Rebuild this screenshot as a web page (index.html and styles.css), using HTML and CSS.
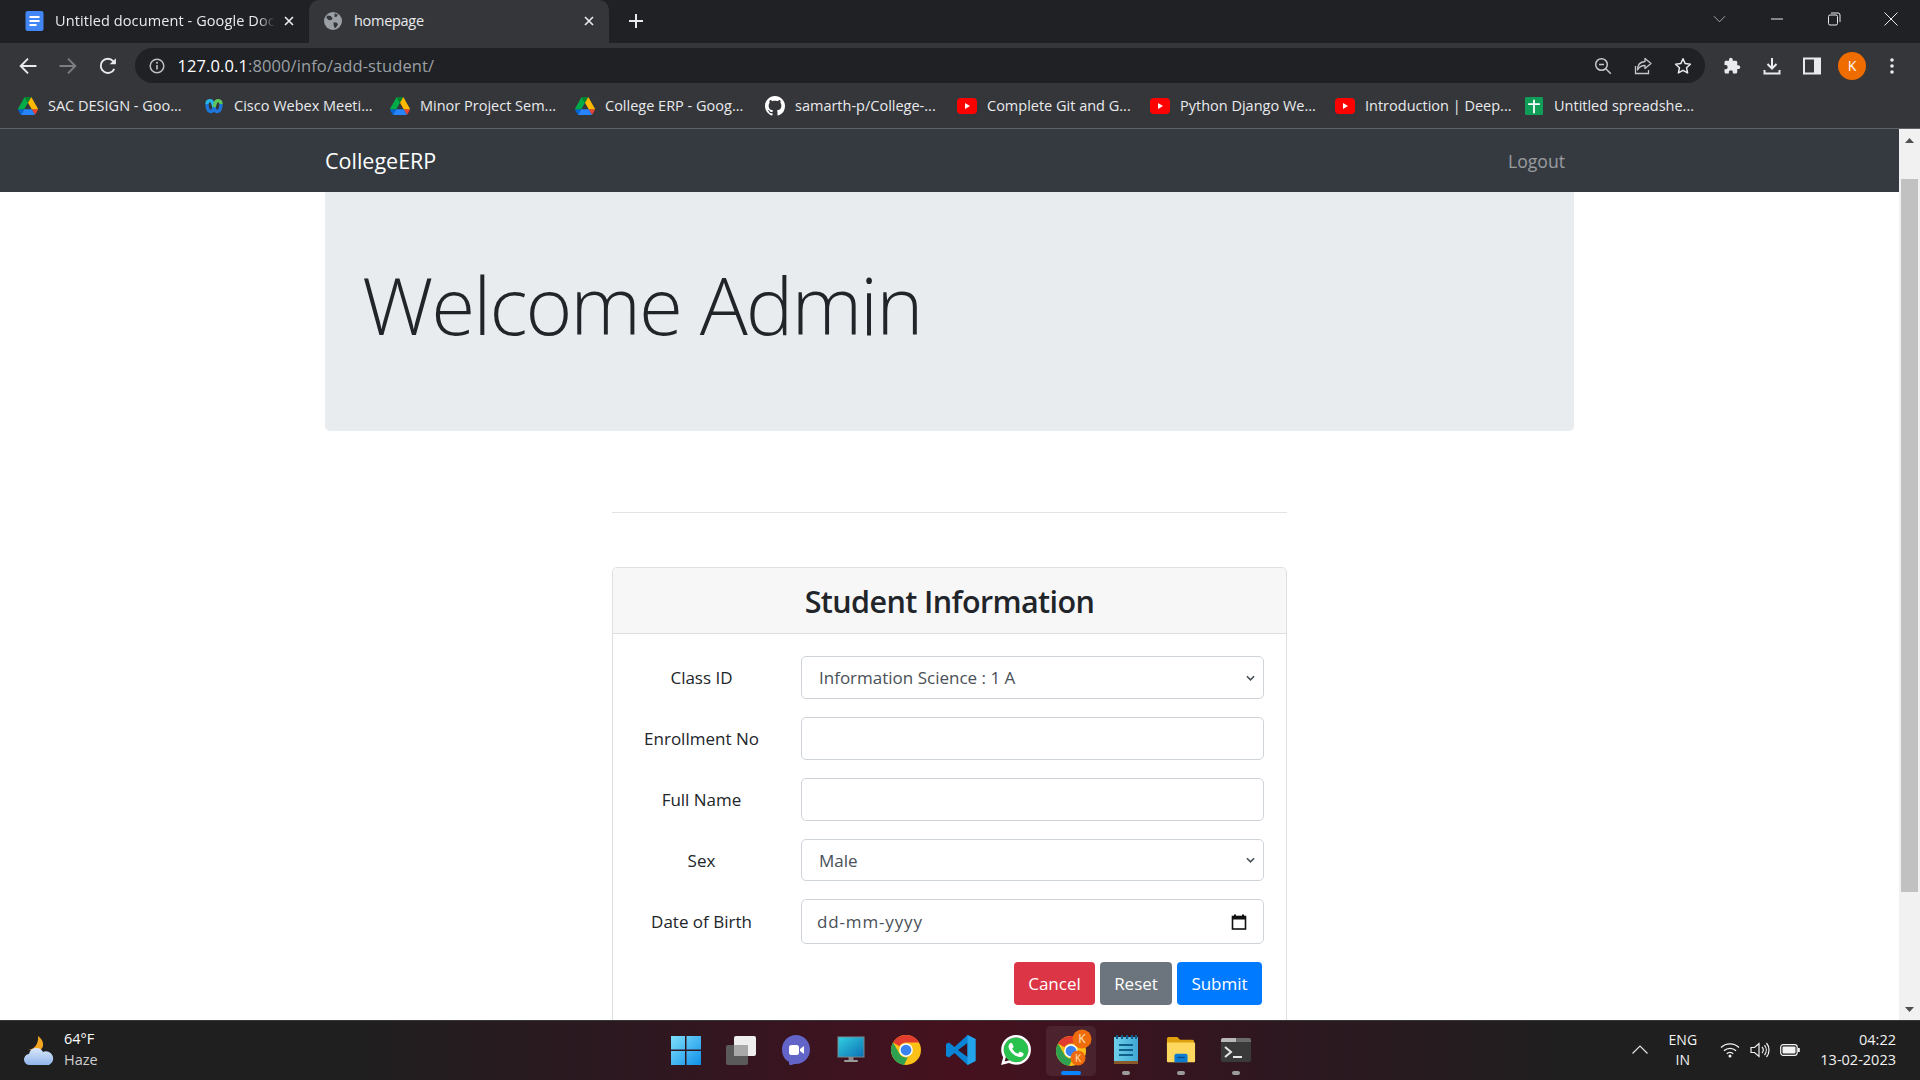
FILE: index.html
```html
<!DOCTYPE html>
<html lang="en">
<head>
<meta charset="utf-8">
<title>homepage</title>
<link rel="stylesheet" href="styles.css">
</head>
<body>
<svg class="defs" aria-hidden="true">
  <symbol id="drive" viewBox="0 0 87.3 78">
    <path d="m6.6 66.85 3.85 6.65c.8 1.4 1.95 2.5 3.3 3.3l13.75-23.8h-27.5c0 1.55.4 3.1 1.2 4.5z" fill="#0066da"/>
    <path d="m43.65 25-13.75-23.8c-1.35.8-2.5 1.9-3.3 3.3l-25.4 44a9.06 9.06 0 0 0 -1.2 4.5h27.5z" fill="#00ac47"/>
    <path d="m73.55 76.8c1.35-.8 2.5-1.9 3.3-3.3l1.6-2.75 7.65-13.25c.8-1.4 1.2-2.95 1.2-4.5h-27.5l5.85 11.5z" fill="#ea4335"/>
    <path d="m43.65 25 13.75-23.8c-1.35-.8-2.9-1.2-4.5-1.2h-18.5c-1.6 0-3.15.45-4.5 1.2z" fill="#00832d"/>
    <path d="m59.8 53h-32.3l-13.75 23.8c1.35.8 2.9 1.2 4.5 1.2h50.8c1.6 0 3.15-.45 4.5-1.2z" fill="#2684fc"/>
    <path d="m73.4 26.5-12.7-22c-.8-1.4-1.95-2.5-3.3-3.3l-13.75 23.8 16.15 28h27.45c0-1.55-.4-3.1-1.2-4.5z" fill="#ffba00"/>
  </symbol>
  <symbol id="yt" viewBox="0 0 20 18">
    <rect x="0" y="1" width="20" height="16" rx="4" fill="#f00"/>
    <path d="M8 6l5 3-5 3z" fill="#fff"/>
  </symbol>
  <symbol id="chrome" viewBox="0 0 48 48">
    <circle cx="24" cy="24" r="24" fill="#fbc116"/>
    <path d="M24 0a24 24 0 0 1 20.8 12H24a12 12 0 0 0-10.4 6L3.2 12A24 24 0 0 1 24 0z" fill="#e33b2e"/>
    <path d="M3.2 12l10.4 18A12 12 0 0 0 27 35.6L20.7 47.8A24 24 0 0 1 3.2 12z" fill="#2fa04f"/>
    <circle cx="24" cy="24" r="11" fill="#fff"/>
    <circle cx="24" cy="24" r="8.6" fill="#3b82f1"/>
  </symbol>
</svg>

<header class="chrome">
  <div class="tabstrip">
    <div class="tab tab-off">
      <svg class="tab-ico" viewBox="0 0 18 20"><rect width="18" height="20" rx="2" fill="#4285f4"/><path d="M4 6h10M4 10h10M4 14h7" stroke="#fff" stroke-width="2"/></svg>
      <span class="tab-title tab-fade">Untitled document - Google Docs</span>
      <svg class="tab-x" viewBox="0 0 10 10"><path d="M1 1l8 8M9 1l-8 8" stroke="#e8eaed" stroke-width="1.7"/></svg>
    </div>
    <div class="tab tab-on">
      <svg class="tab-ico globe" viewBox="0 0 16 16"><circle cx="8" cy="8" r="8" fill="#9aa0a6"/><path d="M3 3.2l3 .3 1.6 2-1 1.6-2.2.2L2 5.2zM9.5 1.2l2.8 1.3-1 1.8-2 .2zM8.5 9l3 .5 1 1.7-2.2 3-1.3-.6-.5-2.6z" fill="#35363a"/></svg>
      <span class="tab-title">homepage</span>
      <svg class="tab-x" viewBox="0 0 10 10"><path d="M1 1l8 8M9 1l-8 8" stroke="#e8eaed" stroke-width="1.7"/></svg>
    </div>
    <svg class="newtab" viewBox="0 0 14 14"><path d="M7 0v14M0 7h14" stroke="#e8eaed" stroke-width="2"/></svg>
    <div class="winctl">
      <svg class="win-chev" viewBox="0 0 14 8"><path d="M1 1l6 6 6-6" fill="none" stroke="#aeb1b5" stroke-width="1"/></svg>
      <svg class="win-btn" viewBox="0 0 14 14"><path d="M1 7h12" stroke="#e8eaed" stroke-width="1"/></svg>
      <svg class="win-btn" viewBox="0 0 14 14"><rect x="1.5" y="3" width="9" height="10" rx="1.5" fill="none" stroke="#e8eaed"/><path d="M4 1h7a2 2 0 0 1 2 2v7" fill="none" stroke="#e8eaed"/></svg>
      <svg class="win-btn" viewBox="0 0 14 14"><path d="M.5.5l13 13M13.5.5l-13 13" stroke="#e8eaed" stroke-width="1"/></svg>
    </div>
  </div>

  <div class="toolbar">
    <svg class="tb-ico" viewBox="0 0 16 16"><path d="M15.5 8H2M8 1.5L1.5 8 8 14.5" fill="none" stroke="#e8eaed" stroke-width="1.7"/></svg>
    <svg class="tb-ico" viewBox="0 0 16 16"><path d="M.5 8H14M8 1.5L14.5 8 8 14.5" fill="none" stroke="#7b7e82" stroke-width="1.7"/></svg>
    <svg class="tb-ico" viewBox="0 0 16 16"><path d="M13.6 10.5A6.3 6.3 0 1 1 12.6 3.7L14.5 5.6" fill="none" stroke="#e8eaed" stroke-width="1.7"/><path d="M15 1v5.5H9.5z" fill="#e8eaed"/></svg>
    <div class="omnibox">
      <svg class="info" viewBox="0 0 16 16"><circle cx="8" cy="8" r="6.8" fill="none" stroke="#bdc1c6" stroke-width="1.5"/><path d="M8 7v4.5" stroke="#bdc1c6" stroke-width="1.6"/><circle cx="8" cy="4.8" r="1" fill="#bdc1c6"/></svg>
      <span class="url"><span class="url-host">127.0.0.1</span>:8000/info/add-student/</span>
      <span class="omni-end">
        <svg class="omni-ico" viewBox="0 0 18 18"><circle cx="7.5" cy="7.5" r="5.8" fill="none" stroke="#c4c7cb" stroke-width="1.5"/><path d="M5 7.5h5M11.8 11.8l5 5" stroke="#c4c7cb" stroke-width="1.5"/></svg>
        <svg class="omni-ico" viewBox="0 0 18 18"><path d="M1.5 9v7.5h13V13" fill="none" stroke="#c4c7cb" stroke-width="1.3"/><path d="M11 1.5L17 6.5 11 11.5V8.5C7 8.5 5 10 3.5 13 3.5 8 6 4.8 11 4.5z" fill="none" stroke="#c4c7cb" stroke-width="1.3" stroke-linejoin="round"/></svg>
        <svg class="omni-ico" viewBox="0 0 18 18"><path d="M9 1.8l2.2 4.8 5.2.6-3.9 3.5 1.1 5.2L9 13.3 4.4 15.900l1.100-5.200L1.600 7.200l5.200-.6z" fill="none" stroke="#e8eaed" stroke-width="1.5" stroke-linejoin="round"/></svg>
      </span>
    </div>
    <div class="tb-right">
      <svg class="tb-ico" viewBox="0 0 24 24"><path fill="#e8eaed" d="M20.5 11H19V7c0-1.1-.9-2-2-2h-4V3.5C13 2.12 11.88 1 10.5 1S8 2.12 8 3.5V5H4c-1.1 0-1.99.9-1.99 2v3.8H3.5c1.49 0 2.7 1.21 2.7 2.7s-1.21 2.7-2.7 2.7H2V20c0 1.1.9 2 2 2h3.8v-1.5c0-1.49 1.21-2.7 2.7-2.7 1.49 0 2.7 1.21 2.7 2.7V22H17c1.1 0 2-.9 2-2v-4h1.5c1.38 0 2.5-1.12 2.5-2.5S21.88 11 20.5 11z"/></svg>
      <svg class="tb-ico" viewBox="0 0 18 18"><path d="M9 1v10M4.5 7L9 11.5 13.5 7" fill="none" stroke="#e8eaed" stroke-width="2"/><path d="M1.5 13v3.5h15V13" fill="none" stroke="#e8eaed" stroke-width="2"/></svg>
      <svg class="tb-ico" viewBox="0 0 18 18"><rect x="1" y="1.5" width="16" height="15" fill="none" stroke="#e8eaed" stroke-width="2"/><rect x="11" y="1.5" width="6" height="15" fill="#e8eaed"/></svg>
      <span class="avatar">K</span>
      <svg class="tb-ico" viewBox="0 0 18 18"><circle cx="9" cy="3" r="1.8" fill="#e8eaed"/><circle cx="9" cy="9" r="1.8" fill="#e8eaed"/><circle cx="9" cy="15" r="1.8" fill="#e8eaed"/></svg>
    </div>
  </div>

  <nav class="bookmarks">
    <a class="bm bm1"><svg class="bm-ico"><use href="#drive"/></svg>SAC DESIGN - Goo...</a>
    <a class="bm bm2"><svg class="bm-ico" viewBox="0 0 20 18"><g fill="none" stroke-width="3.4"><path d="M3 7c0 9 6 10 7 3" stroke="#1d76db"/><path d="M17 7c0 9-6 10-7 3" stroke="#1d76db"/><path d="M3 7c0-4 5-5 6 0l1 3" stroke="#27b5e8"/><path d="M17 7c0-4-5-5-6 0l-1 3" stroke="#5fc65a"/></g></svg>Cisco Webex Meeti...</a>
    <a class="bm bm3"><svg class="bm-ico"><use href="#drive"/></svg>Minor Project Sem...</a>
    <a class="bm bm4"><svg class="bm-ico"><use href="#drive"/></svg>College ERP - Goog...</a>
    <a class="bm bm5"><svg class="bm-ico gh" viewBox="0 0 16 16"><path fill="#fff" d="M8 0C3.58 0 0 3.58 0 8c0 3.54 2.29 6.53 5.47 7.59.4.07.55-.17.55-.38 0-.19-.01-.82-.01-1.49-2.01.37-2.53-.49-2.69-.94-.09-.23-.48-.94-.82-1.13-.28-.15-.68-.52-.01-.53.63-.01 1.08.58 1.23.82.72 1.21 1.87.87 2.33.66.07-.52.28-.87.51-1.07-1.78-.2-3.64-.89-3.64-3.95 0-.87.31-1.59.82-2.15-.08-.2-.36-1.02.08-2.12 0 0 .67-.21 2.2.82.64-.18 1.32-.27 2-.27.68 0 1.36.09 2 .27 1.53-1.04 2.2-.82 2.2-.82.44 1.1.16 1.92.08 2.12.51.56.82 1.27.82 2.15 0 3.07-1.87 3.75-3.65 3.95.29.25.54.73.54 1.48 0 1.07-.01 1.93-.01 2.2 0 .21.15.46.55.38A8.013 8.013 0 0016 8c0-4.42-3.58-8-8-8z"/></svg>samarth-p/College-...</a>
    <a class="bm bm6"><svg class="bm-ico"><use href="#yt"/></svg>Complete Git and G...</a>
    <a class="bm bm7"><svg class="bm-ico"><use href="#yt"/></svg>Python Django We...</a>
    <a class="bm bm8"><svg class="bm-ico"><use href="#yt"/></svg>Introduction | Deep...</a>
    <a class="bm bm9"><svg class="bm-ico" viewBox="0 0 20 20"><rect width="20" height="20" rx="1.5" fill="#0f9d58"/><path d="M10 3v15M3.5 8h13" stroke="#fff" stroke-width="2"/></svg>Untitled spreadshe...</a>
  </nav>
</header>

<div class="viewport">
  <main class="page">
    <div class="navbar">
      <div class="wrap nav-inner">
        <a class="brand">CollegeERP</a>
        <a class="logout">Logout</a>
      </div>
    </div>
    <div class="wrap">
      <section class="jumbo"><h1 class="display">Welcome Admin</h1></section>
    </div>
    <div class="form-col">
      <hr class="rule">
      <form class="card">
        <div class="card-head"><h3 class="card-title">Student Information</h3></div>
        <div class="card-body">
          <label class="lbl">Class ID</label>
          <select class="ctl ctl-sel"><option>Information Science : 1 A</option></select>
          <label class="lbl">Enrollment No</label>
          <input class="ctl" type="text">
          <label class="lbl">Full Name</label>
          <input class="ctl" type="text">
          <label class="lbl">Sex</label>
          <select class="ctl ctl-sel"><option>Male</option></select>
          <label class="lbl">Date of Birth</label>
          <div class="ctl ctl-date">
            <input class="date-in" type="text" placeholder="dd-mm-yyyy">
            <svg class="cal" viewBox="0 0 16 16"><path d="M4 .5v3M12 .5v3" stroke="#111" stroke-width="2"/><rect x="1.5" y="2.5" width="13" height="12.5" fill="none" stroke="#111" stroke-width="1.6"/><rect x="1.5" y="2.5" width="13" height="3" fill="#111"/></svg>
          </div>
          <div class="actions">
            <button class="btn btn-red" type="button">Cancel</button>
            <button class="btn btn-gray" type="button">Reset</button>
            <button class="btn btn-blue" type="button">Submit</button>
          </div>
        </div>
      </form>
    </div>
  </main>
  <div class="scrollbar">
    <svg class="sb-arrow" viewBox="0 0 9 5"><path d="M4.5 0L9 5H0z" fill="#505050"/></svg>
    <div class="sb-thumb"></div>
    <svg class="sb-arrow sb-down" viewBox="0 0 9 5"><path d="M0 0h9L4.5 5z" fill="#505050"/></svg>
  </div>
</div>

<footer class="taskbar">
  <div class="tb-weather">
    <svg class="wx" viewBox="0 0 32 30"><defs><linearGradient id="cloud" x1="0" y1="0" x2="0" y2="1"><stop offset="0" stop-color="#dbe8fa"/><stop offset="1" stop-color="#8fb4ea"/></linearGradient></defs><path d="M15 0c7 5 6 12 2 14H4c7 0 12-6 11-14z" fill="#f5a623"/><path d="M7 29a5.500 5.500 0 0 1-1-11 7.500 7.500 0 0 1 14-2 6.500 6.500 0 0 1 6 13z" fill="url(#cloud)"/></svg>
    <div class="wx-text"><span class="wx-temp">64°F</span><span class="wx-sub">Haze</span></div>
  </div>
  <div class="tb-apps">
    <span class="app">
      <svg class="app-ico" viewBox="0 0 30 30"><defs><linearGradient id="win" x1="0" y1="0" x2="1" y2="1"><stop offset="0" stop-color="#7fe0fb"/><stop offset="1" stop-color="#0f8fe8"/></linearGradient></defs><path d="M0 1h14v13.5H0zM15.5 1H30v13.5H15.5zM0 16h14v14H0zM15.5 16H30v14H15.5z" fill="url(#win)"/></svg>
    </span>
    <span class="app">
      <svg class="app-ico" viewBox="0 0 30 30"><rect x="0" y="10" width="22" height="20" rx="2" fill="#5a5a5a"/><rect x="8" y="1" width="22" height="20" rx="2" fill="#eeeeee"/><rect x="8" y="10" width="14" height="11" fill="#a9a9a9"/></svg>
    </span>
    <span class="app">
      <svg class="app-ico" viewBox="0 0 30 30"><path d="M15 0c8 0 14 6.500 14 14.500S23 29 15 29c-2 0-3 .5-5 1-1 .3-2-.3-2-1.500v-1.800C3.500 25 1 20 1 14.500 1 6.500 7 0 15 0z" fill="#6264c8"/><rect x="8" y="10" width="10" height="10" rx="2.5" fill="#fff"/><path d="M19 14l4-3v8l-4-3z" fill="#fff"/></svg>
    </span>
    <span class="app">
      <svg class="app-ico" viewBox="0 0 30 30"><defs><linearGradient id="mon" x1="0" y1="0" x2="1" y2="1"><stop offset="0" stop-color="#31d0e0"/><stop offset="1" stop-color="#0c6fb5"/></linearGradient></defs><rect x="2" y="2" width="26" height="20" fill="url(#mon)" stroke="#7a8a90"/><rect x="12.5" y="22" width="5" height="3" fill="#8a8a8a"/><rect x="8" y="25" width="14" height="2" rx="1" fill="#9a9a9a"/></svg>
    </span>
    <span class="app"><svg class="app-ico"><use href="#chrome"/></svg></span>
    <span class="app">
      <svg class="app-ico" viewBox="0 0 30 30"><path d="M21.5 0l8 4v22l-8 4L8.500 18 3 22.500 0 21V9l3-1.500 5.500 4.500z" fill="#0a84d4"/><path d="M21.5 8L12 15l9.500 7z" fill="#3a1220"/><path d="M21.5 0l8 4v22l-8 4z" fill="#23a3ea"/></svg>
    </span>
    <span class="app">
      <svg class="app-ico" viewBox="0 0 24 24"><circle cx="12" cy="12" r="10" fill="#29c24f"/><path fill="#fff" d="M17.472 14.382c-.297-.149-1.758-.867-2.03-.967-.273-.099-.471-.148-.67.15-.197.297-.767.966-.94 1.164-.173.199-.347.223-.644.075-.297-.15-1.255-.463-2.39-1.475-.883-.788-1.48-1.761-1.653-2.059-.173-.297-.018-.458.13-.606.134-.133.298-.347.446-.52.149-.174.198-.298.298-.497.099-.198.05-.371-.025-.52-.075-.149-.669-1.612-.916-2.207-.242-.579-.487-.5-.669-.51-.173-.008-.371-.01-.57-.01-.198 0-.52.074-.792.372-.272.297-1.04 1.016-1.04 2.479 0 1.462 1.065 2.875 1.213 3.074.149.198 2.096 3.2 5.077 4.487.709.306 1.262.489 1.694.625.712.227 1.36.195 1.871.118.571-.085 1.758-.719 2.006-1.413.248-.694.248-1.289.173-1.413-.074-.124-.272-.198-.57-.347m-5.421 7.403h-.004a9.87 9.87 0 01-5.031-1.378l-.361-.214-3.741.982.998-3.648-.235-.374a9.86 9.86 0 01-1.51-5.26c.001-5.45 4.436-9.884 9.888-9.884 2.64 0 5.122 1.03 6.988 2.898a9.825 9.825 0 012.893 6.994c-.003 5.45-4.437 9.884-9.885 9.884m8.413-18.297A11.815 11.815 0 0012.05 0C5.495 0 .16 5.335.157 11.892c0 2.096.547 4.142 1.588 5.945L.057 24l6.305-1.654a11.882 11.882 0 005.683 1.448h.005c6.554 0 11.89-5.335 11.893-11.893a11.821 11.821 0 00-3.48-8.413z"/></svg>
    </span>
    <span class="app app-active">
      <svg class="app-ico app-ico-lg" viewBox="0 0 36 36"><svg x="3" y="3" width="30" height="30"><use href="#chrome"/></svg><circle cx="29" cy="6" r="9.5" fill="#ee6c0b"/><text class="badge-k" x="29" y="10">K</text><circle cx="25" cy="25" r="7.5" fill="#ee6c0b"/><text class="badge-k badge-sm" x="25" y="28.5">K</text></svg>
      <i class="run run-on"></i>
    </span>
    <span class="app">
      <svg class="app-ico" viewBox="0 0 30 30"><defs><linearGradient id="note" x1="0" y1="0" x2="1" y2="0"><stop offset="0" stop-color="#6fd0ea"/><stop offset="1" stop-color="#3fa8d4"/></linearGradient></defs><rect x="3" y="2" width="24" height="25" fill="url(#note)"/><rect x="3" y="26" width="24" height="3" fill="#8b5a2b"/><path d="M8 10h14M8 15h14M8 20h14" stroke="#0e5f8a" stroke-width="2"/><path d="M6 0v4M11 0v4M16 0v4M21 0v4M25 0v4" stroke="#0e5f8a" stroke-width="2"/></svg>
      <i class="run"></i>
    </span>
    <span class="app">
      <svg class="app-ico" viewBox="0 0 32 30"><path d="M1 3a2 2 0 0 1 2-2h9l3 3h13a2 2 0 0 1 2 2v5H1z" fill="#e0a10f"/><path d="M1 7h29a1 1 0 0 1 1 1v19a1 1 0 0 1-1 1H2a1 1 0 0 1-1-1z" fill="#fed75e"/><path d="M9 28v-7a2 2 0 0 1 2-2h10a2 2 0 0 1 2 2v7z" fill="#0b7cd1"/><path d="M12 23h8" stroke="#0a4d85" stroke-width="1.5"/></svg>
      <i class="run"></i>
    </span>
    <span class="app">
      <svg class="app-ico" viewBox="0 0 30 30"><rect y="3" width="30" height="24" rx="2" fill="#3a3a3a"/><path d="M0 5a2 2 0 0 1 2-2h13v4H0z" fill="#b8b8b8"/><path d="M15 3h13a2 2 0 0 1 2 2v2H15z" fill="#6a6a6a"/><path d="M4 12l6 5-6 5" fill="none" stroke="#e8e8e8" stroke-width="2"/><path d="M12 22h9" stroke="#e8e8e8" stroke-width="2"/></svg>
      <i class="run"></i>
    </span>
  </div>
  <div class="tb-tray">
    <svg class="tray-chev" viewBox="0 0 16 9"><path d="M.5 8.5L8 1l7.5 7.5" fill="none" stroke="#e6e6e6" stroke-width="1.2"/></svg>
    <div class="lang"><span>ENG</span><span>IN</span></div>
    <svg class="tray-ico" viewBox="0 0 20 16"><path d="M1 5.5a13 13 0 0 1 18 0M4 8.8a8.5 8.5 0 0 1 12 0M6.8 11.8a4.5 4.5 0 0 1 6.4 0" fill="none" stroke="#f2f2f2" stroke-width="1.3"/><circle cx="10" cy="14" r="1.5" fill="#f2f2f2"/></svg>
    <svg class="tray-ico" viewBox="0 0 20 16"><path d="M1 5.5h3.5L9 1.5v13l-4.5-4H1z" fill="none" stroke="#f2f2f2" stroke-width="1.2"/><path d="M12 5a4.5 4.5 0 0 1 0 6M14.5 3a8 8 0 0 1 0 10M16.5 1a11 11 0 0 1 0 14" fill="none" stroke="#f2f2f2" stroke-width="1.2"/></svg>
    <svg class="tray-ico" viewBox="0 0 20 12"><rect x=".7" y=".7" width="16.5" height="10.6" rx="2.5" fill="none" stroke="#f2f2f2" stroke-width="1.2"/><rect x="2.5" y="2.5" width="13" height="7" rx="1" fill="#f2f2f2"/><rect x="18" y="4" width="1.8" height="4" fill="#f2f2f2"/></svg>
    <div class="clock"><span>04:22</span><span>13-02-2023</span></div>
  </div>
</footer>
</body>
</html>
```

FILE: styles.css
```css
* { box-sizing: border-box; }
html, body { margin: 0; height: 100%; }
body {
  display: flex;
  flex-direction: column;
  height: 100vh;
  overflow: hidden;
  font-family: "Open Sans", "Noto Sans", "Liberation Sans", sans-serif;
  color: #212529;
  background: #fff;
}
.defs { width: 0; height: 0; position: absolute; }

/* browser chrome */
.chrome { flex: none; background: #35363a; color: #e8eaed; border-bottom: 1px solid #5f6368; }
.tabstrip { display: flex; align-items: center; height: 43px; background: #202124; }
.tab { display: flex; align-items: center; height: 43px; flex: none; padding-bottom: 2px; }
.tab-off { width: 309px; padding-left: 25px; padding-right: 15px; }
.tab-on { width: 300px; padding-left: 15px; padding-right: 15px; background: #35363a; border-radius: 10px 10px 0 0; margin-right: 20px; }
.tab-ico { width: 19px; height: 20px; margin-right: 11px; flex: none; }
.globe { width: 18px; height: 18px; margin-right: 12px; }
.tab-title { flex: 1; font-size: 14.5px; white-space: nowrap; overflow: hidden; letter-spacing: -.3px; }
.tab-fade { letter-spacing: .1px; -webkit-mask-image: linear-gradient(90deg, #000 92%, transparent); mask-image: linear-gradient(90deg, #000 92%, transparent); margin-right: 9px; }
.tab-x { width: 10px; height: 10px; flex: none; }
.newtab { width: 14px; height: 14px; flex: none; margin-top: -2px; }
.winctl { margin-left: auto; display: flex; align-items: center; }
.win-chev { width: 13px; height: 8px; margin-right: 44px; margin-top: -6px; }
.win-btn { width: 14px; height: 14px; margin-right: 43px; margin-top: -6px; }
.win-btn:last-child { margin-right: 22px; }

.toolbar { display: flex; align-items: center; height: 45px; padding: 5px 0; }
.tb-ico { width: 18px; height: 18px; margin: 0 11px; flex: none; }
.toolbar > .tb-ico:first-child { margin-left: 18.5px; }
.omnibox { display: flex; align-items: center; width: 1570px; height: 35px; margin-left: 7px; padding: 0 13px 0 14px; border-radius: 18px; background: #202124; }
.info { width: 16px; height: 16px; margin-right: 13px; flex: none; }
.url { font-size: 16.5px; letter-spacing: .1px; color: #9aa0a6; white-space: nowrap; }
.url-host { color: #fff; }
.omni-end { margin-left: auto; display: flex; align-items: center; gap: 22px; }
.omni-ico { width: 18px; height: 18px; }
.tb-right { display: flex; align-items: center; margin-left: 7.5px; }
.avatar { width: 28px; height: 28px; border-radius: 50%; background: #ef6c00; color: #fff; font-size: 14px; display: flex; align-items: center; justify-content: center; margin: 0 6px; flex: none; }

.bookmarks { display: flex; align-items: center; height: 40px; padding: 0 0 5px 18px; font-size: 14.5px; color: #e8eaed; white-space: nowrap; }
.bm { display: flex; align-items: center; flex: none; }
.bm1, .bm2 { width: 186px; }
.bm3, .bm7 { width: 185px; }
.bm4 { width: 190px; }
.bm5 { width: 192px; }
.bm6 { width: 193px; }
.bm8 { width: 189px; }
.bm-ico { width: 20px; height: 18px; margin-right: 10px; flex: none; }
.gh { width: 20px; height: 20px; }

/* viewport */
.viewport { flex: 1; min-height: 0; display: flex; overflow: hidden; }
.page { flex: 1; min-width: 0; overflow: hidden; }
.scrollbar { width: 21px; flex: none; background: #f1f1f1; display: flex; flex-direction: column; align-items: center; }
.sb-arrow { width: 9px; height: 5px; margin-top: 9px; flex: none; }
.sb-thumb { width: 17px; height: 713px; margin-top: 36px; background: #c1c1c1; flex: none; }
.sb-down { margin-top: auto; margin-bottom: 8px; }

.wrap { width: 1249px; margin: 0 auto; }
.navbar { height: 63px; background: #343a40; }
.nav-inner { display: flex; align-items: center; justify-content: space-between; height: 100%; padding-right: 9px; }
.brand { font-size: 21.5px; color: #fff; }
.logout { font-size: 17.6px; color: rgba(255,255,255,.5); }

.jumbo { height: 239px; padding: 0 37px 16px; display: flex; align-items: center; background: #e9ecef; border-radius: 0 0 5px 5px; }
.display { margin: 0; font-size: 80px; font-weight: 300; line-height: 1.2; letter-spacing: -2px; color: #212529; }

.form-col { width: 675px; margin: 0 auto; }
.rule { margin: 81px 0 54px; border: 0; border-top: 1px solid #e3e3e3; }
.card { display: block; border: 1px solid #dfdfdf; border-radius: 5px; background: #fff; }
.card-head { height: 66px; display: flex; align-items: center; justify-content: center; background: #f7f7f7; border-bottom: 1px solid #dfdfdf; border-radius: 5px 5px 0 0; }
.card-title { margin: 0; font-size: 30.5px; font-weight: 600; letter-spacing: -.6px; color: #212529; }
.card-body {
  display: grid;
  grid-template-columns: 133px 463px;
  grid-template-rows: 43px 43px 43px 42px 45px 43px;
  column-gap: 33px;
  row-gap: 18px;
  align-items: center;
  padding: 22px 22px 40px 22px;
}
.lbl { text-align: center; font-size: 17px; color: #212529; }
.ctl { width: 100%; height: 100%; padding: 0 15px; border: 1px solid #ced4da; border-radius: 5px; background: #fff; color: #495057; font: inherit; font-size: 17px; }
.ctl-sel {
  padding-left: 17px;
  appearance: none;
  -webkit-appearance: none;
  background: #fff url("data:image/svg+xml,%3Csvg xmlns='http://www.w3.org/2000/svg' viewBox='0 0 10 6'%3E%3Cpath d='M1 1l4 4 4-4' fill='none' stroke='%23495057' stroke-width='1.8'/%3E%3C/svg%3E") no-repeat right 8px center / 9px 6px;
}
.ctl-date { display: flex; align-items: center; padding-right: 16px; }
.date-in { flex: 1; min-width: 0; border: 0; padding: 0; outline: 0; font: inherit; letter-spacing: .85px; color: #495057; background: none; }
.date-in::placeholder { color: #495057; opacity: 1; }
.cal { width: 16px; height: 16px; flex: none; }
.actions { grid-column: 1 / -1; display: flex; justify-content: flex-end; gap: 5px; height: 43px; padding-right: 2px; }
.btn { height: 43px; padding: 0 14px; border: 0; border-radius: 4px; color: #fff; font: inherit; font-size: 17px; }
.btn-red { width: 81px; background: #dc3545; }
.btn-gray { width: 72px; background: #6c757d; }
.btn-blue { width: 85px; background: #007bff; }

/* taskbar */
.taskbar {
  flex: none;
  height: 60px;
  display: grid;
  grid-template-columns: 1fr auto 1fr;
  align-items: center;
  border-top: 1px solid #383838;
  background: linear-gradient(90deg, #1f1f1f 18%, #2e1720 34%, #46111f 50%, #2e1720 66%, #1f1f1f 82%);
  color: #fff;
}
.tb-weather { display: flex; align-items: center; padding-left: 23px; }
.wx { width: 32px; height: 30px; margin-right: 9px; }
.wx-text { display: flex; flex-direction: column; font-size: 14.5px; line-height: 20.5px; padding-bottom: 2px; }
.wx-sub { color: #cfcfcf; }
.tb-apps { display: flex; align-items: center; margin-left: 1px; }
.app { position: relative; width: 55px; height: 50px; display: flex; align-items: center; justify-content: center; }
.app-ico { width: 30px; height: 30px; margin-bottom: 2px; overflow: visible; }
.app-ico-lg { width: 36px; height: 36px; margin-bottom: 0; }
.app-active { width: 50px; margin: 0 2.5px; background: rgba(255,255,255,.07); border-radius: 5px; }
.badge-k { font-family: "Open Sans", sans-serif; font-size: 12px; fill: #ffe3c4; text-anchor: middle; }
.badge-sm { font-size: 10px; }
.run { position: absolute; left: 50%; bottom: 1px; width: 8px; height: 4px; margin-left: -4px; border-radius: 2px; background: #9b9b9b; }
.run-on { width: 20px; margin-left: -10px; background: #0a84ff; }
.tb-tray { display: flex; align-items: center; justify-content: flex-end; padding: 0 24px 2px 0; font-size: 14.5px; color: #f2f2f2; }
.tray-chev { width: 16px; height: 9px; margin-right: 17.5px; }
.lang { display: flex; flex-direction: column; align-items: center; line-height: 20px; margin-right: 20.5px; width: 34px; font-size: 14px; }
.tray-ico { width: 20px; height: 16px; margin-right: 10px; }
.clock { display: flex; flex-direction: column; align-items: flex-end; line-height: 20px; margin-left: 10px; }
```
